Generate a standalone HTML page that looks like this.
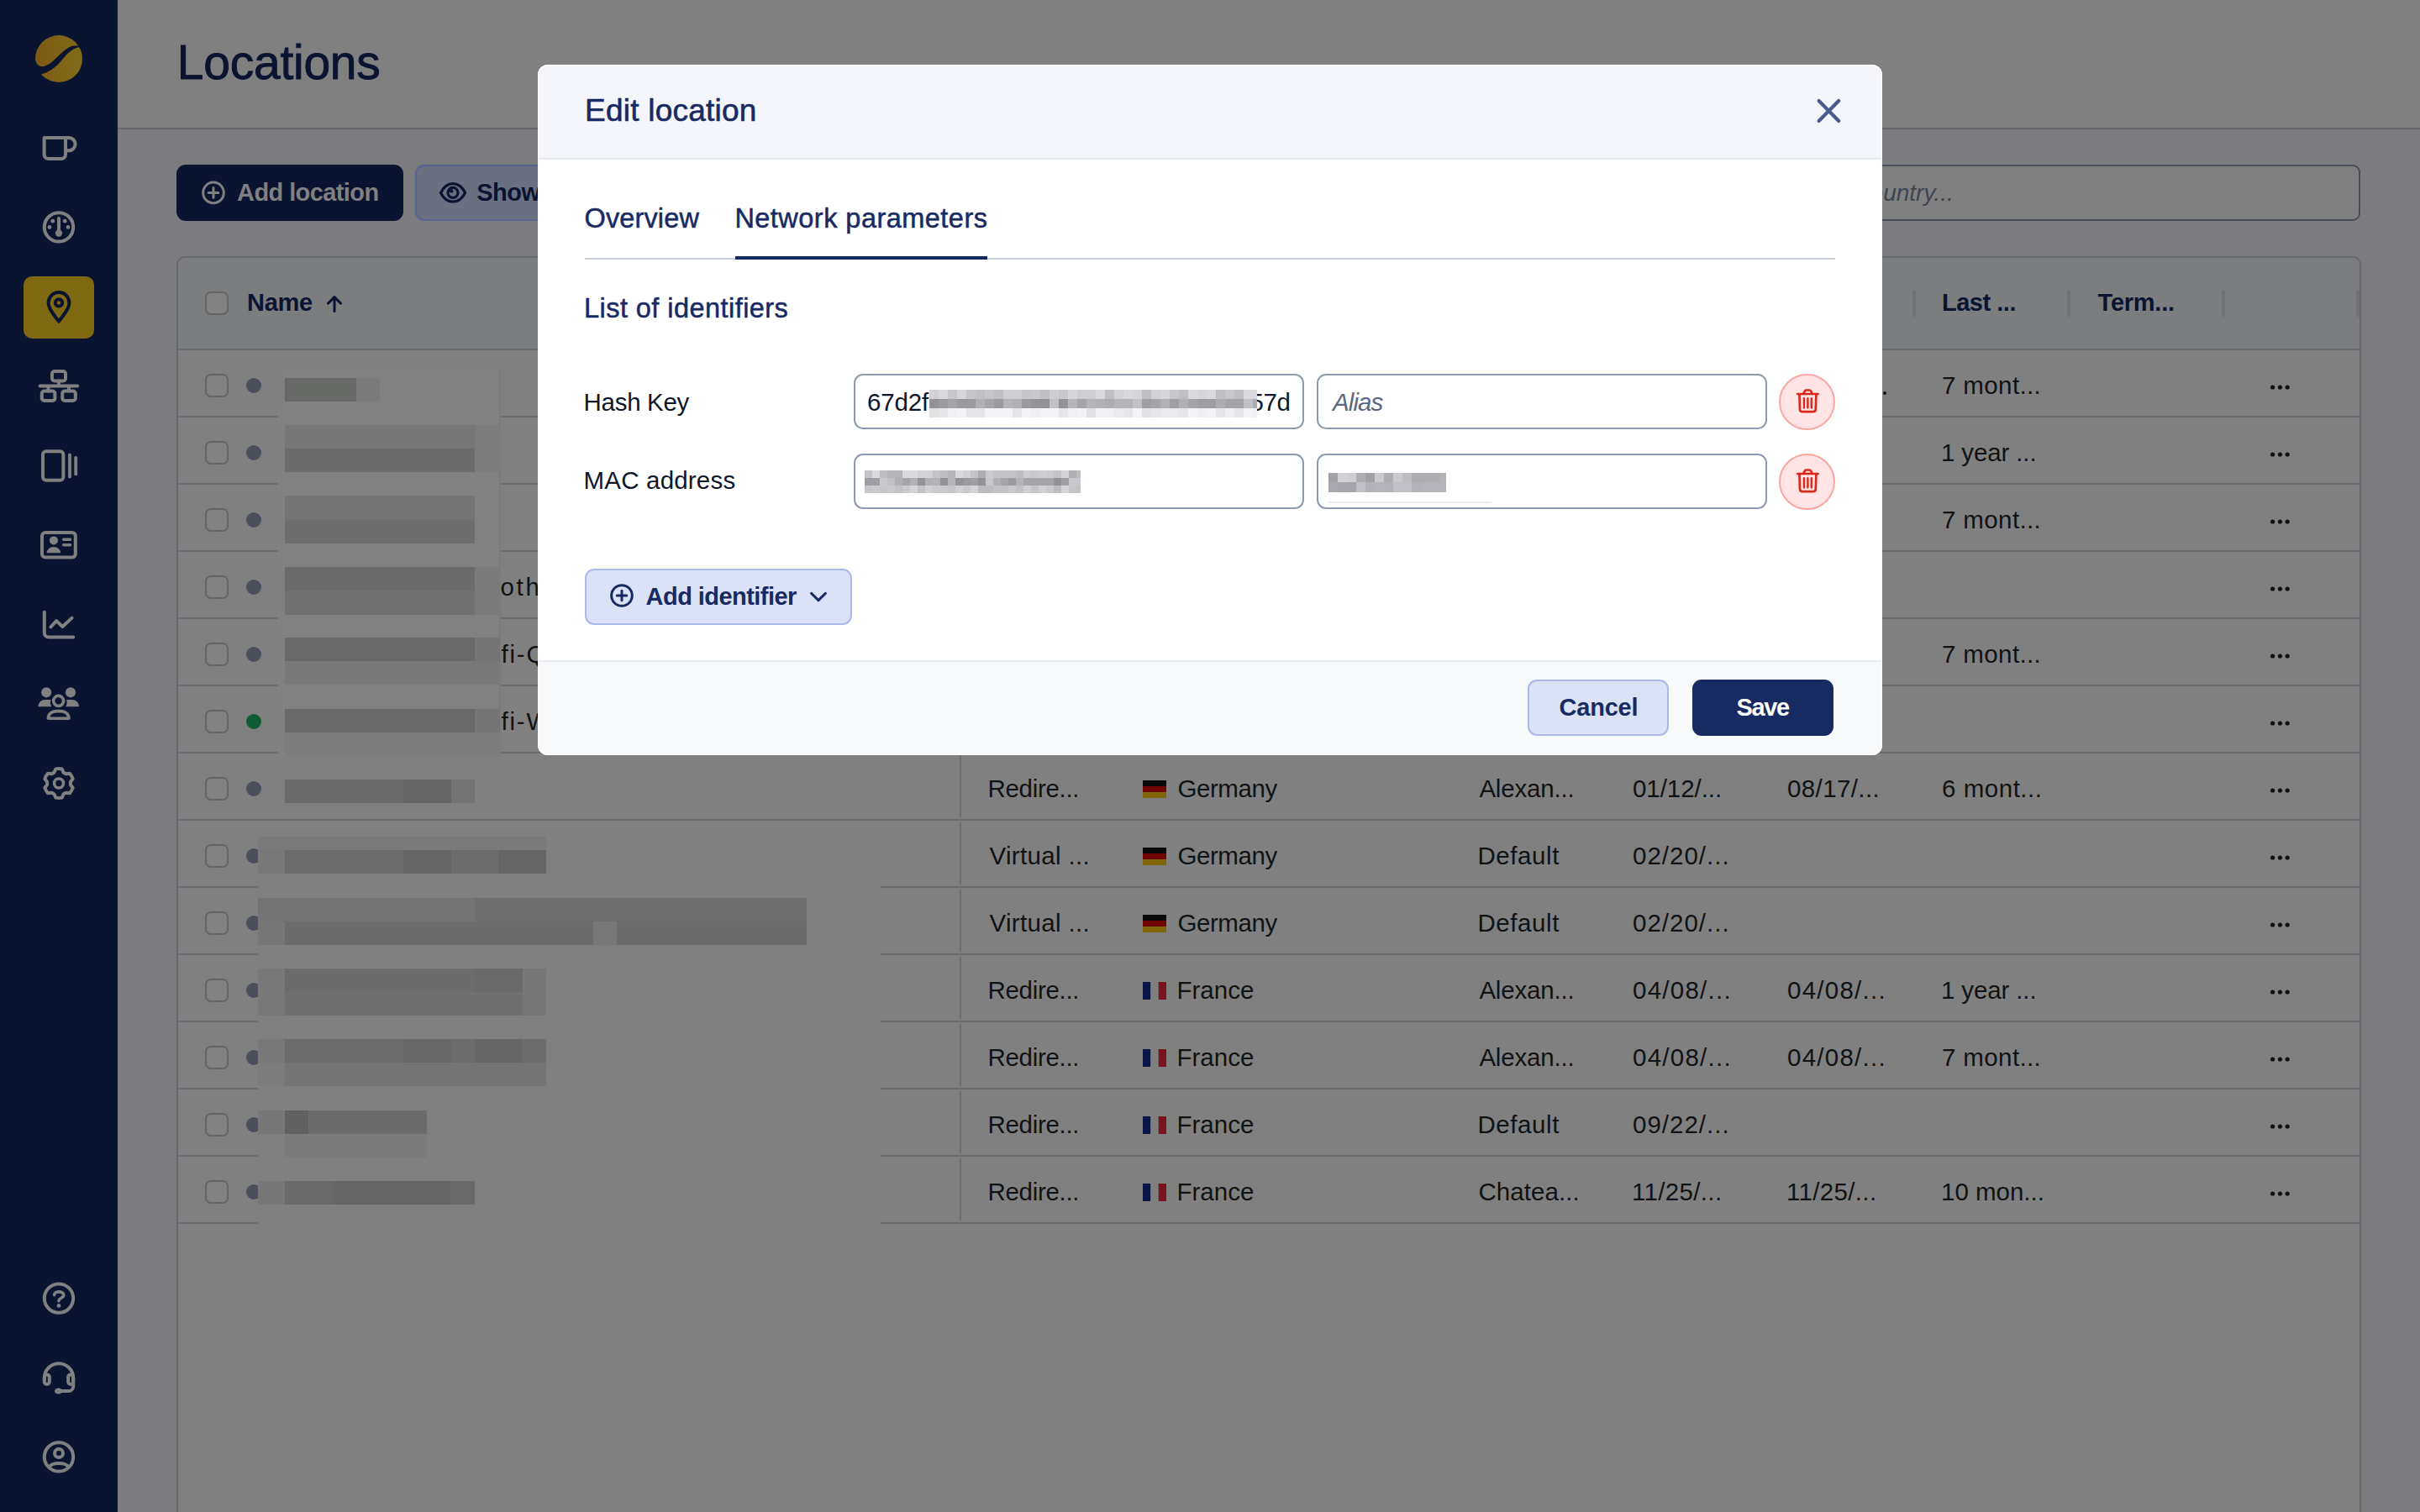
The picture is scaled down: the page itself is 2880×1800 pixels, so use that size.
<!DOCTYPE html>
<html lang="en">
<head>
<meta charset="utf-8">
<title>Locations</title>
<style>
*{box-sizing:border-box;margin:0;padding:0}
html,body{width:2880px;height:1800px;overflow:hidden;background:#7c7c7e;font-family:"Liberation Sans",sans-serif;}
.a{position:absolute}
.t{position:absolute;white-space:pre;line-height:1}
#side{left:0;top:0;width:140px;height:1800px;background:#0a1431}
#side svg{position:absolute;overflow:visible}
#tophead{left:140px;top:0;width:2740px;height:154px;background:#808080;border-bottom:2px solid #65686d}
#title{left:211px;top:47px;font-size:56px;color:#0a1330;letter-spacing:0}
/* toolbar */
#addloc{left:210px;top:196px;width:270px;height:67px;border-radius:11px;background:#0a1330}
#showbtn{left:494px;top:196px;width:300px;height:67px;border-radius:11px;background:#6b7080;border:2px solid #56648f}
#search{left:1500px;top:196px;width:1309px;height:67px;border-radius:9px;border:2px solid #484d5b;background:#808080}
/* table */
#table{left:210px;top:305px;width:2600px;height:1520px;border:2px solid #666a70;border-radius:10px;background:#808080}
.hl{position:absolute;left:212px;width:2596px;height:2px;background:#696c72}
.cb{position:absolute;left:244px;width:28px;height:28px;border:2px solid #656565;border-radius:7px;background:#828282}
.dot{position:absolute;left:293px;width:18px;height:18px;border-radius:50%;background:#4b4f5c}
.c{position:absolute;white-space:pre;line-height:1;font-size:29.5px;color:#111214;letter-spacing:.3px}
.h{position:absolute;white-space:pre;line-height:1;font-size:28px;font-weight:700;color:#0a1330}
.sep{position:absolute;top:345px;width:4px;height:32px;background:#717378;border-radius:1px}
.vl{position:absolute;left:1142px;width:2px;background:#6b6f76}
.m{position:absolute;background:#6a6b6a}
/* modal */
#modal{left:640px;top:77px;width:1600px;height:822px;border-radius:12px;background:#fff;overflow:hidden}
#mhead{left:0;top:0;width:1600px;height:113px;background:#f5f6fb;border-bottom:2px solid #e7e9f1}
#mfoot{left:0;top:709px;width:1600px;height:113px;background:#f8f9fb;border-top:2px solid #e6e8ef}
.inp{position:absolute;width:536px;height:66px;border:2px solid #8e99b2;border-radius:11px;background:#fff}
.del{position:absolute;left:1477px;width:67px;height:67px;border-radius:50%;background:#fee4e4;border:2px solid #fba6a1}
.lbl{position:absolute;left:56px;white-space:pre;line-height:1;font-size:28px;color:#0f172a}
.btn{position:absolute;height:66px;border-radius:11px}
</style>
</head>
<body>
<!-- ============ PAGE (dimmed) ============ -->
<div id="tophead" class="a"></div>
<div class="t" style="left:210.80px;top:45.65px;font-size:57px;letter-spacing:-0.250px;-webkit-text-stroke:.9px #0a1330;color:#0a1330">Locations</div>

<div id="addloc" class="a"></div>
<div id="showbtn" class="a"></div>
<div id="search" class="a"></div>

<div id="table" class="a"></div>
<svg class="a" style="left:238px;top:213px" width="32" height="32" viewBox="0 0 32 32" fill="none" stroke="#808080" stroke-width="3" stroke-linecap="round"><circle cx="16" cy="16.4" r="12.3"/><path d="M16 10.6 V22.2 M10.2 16.4 H21.8"/></svg>
<div class="t" style="left:282.10px;top:215.45px;font-size:29px;letter-spacing:-0.599px;font-weight:700;color:#808080">Add location</div>
<svg class="a" style="left:520px;top:212px" width="38" height="34" viewBox="0 0 38 34" fill="none" stroke="#0a1330" stroke-width="3.2" stroke-linejoin="round"><path d="M4.8 17.4 C8.5 9.5 13.5 6.6 19 6.6 C24.5 6.6 29.5 9.5 33.6 17.4 C29.5 25.3 24.5 28.2 19 28.2 C13.5 28.2 8.5 25.3 4.4 17.4 Z"/><circle cx="19" cy="17.4" r="6" /><circle cx="17.2" cy="15.4" r="2.2" fill="#0a1330" stroke="none"/></svg>
<div class="t" style="left:567.20px;top:215.45px;font-size:29px;letter-spacing:-0.490px;font-weight:700;color:#0a1330">Show</div>
<div class="t" style="left:1905px;top:216px;font-size:28px;font-style:italic;color:#3f4453">Search by name, group, country...</div>
<div class="a" style="left:212px;top:307px;width:2596px;height:108px;background:#7c7d7f;border-radius:8px 8px 0 0"></div>
<div class="hl" style="top:415px"></div>
<div class="cb" style="top:347px"></div>
<div class="h" style="left:294.00px;top:346.05px;font-size:29px;letter-spacing:-0.286px;">Name</div>
<svg class="a" style="left:386px;top:350px" width="24" height="24" viewBox="0 0 24 24" fill="none" stroke="#0a1330" stroke-width="3" stroke-linecap="round" stroke-linejoin="round"><path d="M12 20.4 V3.8 M4.4 11.2 L12 3.6 L19.6 11.2"/></svg>
<div class="sep" style="left:2276px"></div>
<div class="sep" style="left:2460px"></div>
<div class="sep" style="left:2644px"></div>
<div class="sep" style="left:2804px"></div>
<div class="h" style="left:2311.00px;top:346.05px;font-size:29px;letter-spacing:-0.486px;">Last ...</div>
<div class="h" style="left:2496.60px;top:346.05px;font-size:29px;letter-spacing:-0.246px;">Term...</div>
<div class="hl" style="top:495px"></div>
<div class="cb" style="top:445px"></div>
<div class="dot" style="top:450px"></div>
<div class="vl" style="top:419px;height:74px"></div>
<div class="c" style="left:1175.50px;top:443.83px;letter-spacing:-0.312px">Redire...</div>
<svg class="a" style="left:1360px;top:449px" width="28" height="21" viewBox="0 0 28 21"><rect width="28" height="7" fill="#0b0b0b"/><rect y="7" width="28" height="7" fill="#6f0400"/><rect y="14" width="28" height="7" fill="#80650a"/></svg>
<div class="c" style="left:1401.40px;top:443.83px;letter-spacing:-0.427px">Germany</div>
<div class="c" style="left:1760.40px;top:443.83px;letter-spacing:-0.199px">Alexan...</div>
<div class="c" style="left:1942.00px;top:443.83px;letter-spacing:0.199px">10/10/...</div>
<div class="c" style="left:2126.00px;top:443.83px;letter-spacing:0.199px">10/10/...</div>
<div class="c" style="left:2311.00px;top:443.83px;letter-spacing:0.378px">7 mont...</div>
<svg class="a" style="left:2700px;top:457px" width="28" height="8" viewBox="0 0 28 8" fill="#111214"><circle cx="4.6" cy="4" r="2.6"/><circle cx="13.4" cy="4" r="2.6"/><circle cx="22.2" cy="4" r="2.6"/></svg>
<div class="hl" style="top:575px"></div>
<div class="cb" style="top:525px"></div>
<div class="dot" style="top:530px"></div>
<div class="vl" style="top:499px;height:74px"></div>
<div class="c" style="left:1175.50px;top:523.83px;letter-spacing:-0.312px">Redire...</div>
<svg class="a" style="left:1360px;top:529px" width="28" height="21" viewBox="0 0 28 21"><rect width="28" height="7" fill="#0b0b0b"/><rect y="7" width="28" height="7" fill="#6f0400"/><rect y="14" width="28" height="7" fill="#80650a"/></svg>
<div class="c" style="left:1401.40px;top:523.83px;letter-spacing:-0.427px">Germany</div>
<div class="c" style="left:1760.40px;top:523.83px;letter-spacing:-0.199px">Alexan...</div>
<div class="c" style="left:1942.00px;top:523.83px;letter-spacing:0.199px">10/10/...</div>
<div class="c" style="left:2126.00px;top:523.83px;letter-spacing:-0.164px">10/10/</div>
<div class="c" style="left:2310.00px;top:523.83px;letter-spacing:-0.131px">1 year ...</div>
<svg class="a" style="left:2700px;top:537px" width="28" height="8" viewBox="0 0 28 8" fill="#111214"><circle cx="4.6" cy="4" r="2.6"/><circle cx="13.4" cy="4" r="2.6"/><circle cx="22.2" cy="4" r="2.6"/></svg>
<div class="hl" style="top:655px"></div>
<div class="cb" style="top:605px"></div>
<div class="dot" style="top:610px"></div>
<div class="vl" style="top:579px;height:74px"></div>
<div class="c" style="left:1175.50px;top:603.83px;letter-spacing:-0.312px">Redire...</div>
<svg class="a" style="left:1360px;top:609px" width="28" height="21" viewBox="0 0 28 21"><rect width="28" height="7" fill="#0b0b0b"/><rect y="7" width="28" height="7" fill="#6f0400"/><rect y="14" width="28" height="7" fill="#80650a"/></svg>
<div class="c" style="left:1401.40px;top:603.83px;letter-spacing:-0.427px">Germany</div>
<div class="c" style="left:1760.40px;top:603.83px;letter-spacing:-0.199px">Alexan...</div>
<div class="c" style="left:1942.00px;top:603.83px;letter-spacing:0.199px">10/10/...</div>
<div class="c" style="left:2126.00px;top:603.83px;letter-spacing:-0.164px">10/10/</div>
<div class="c" style="left:2311.00px;top:603.83px;letter-spacing:0.378px">7 mont...</div>
<svg class="a" style="left:2700px;top:617px" width="28" height="8" viewBox="0 0 28 8" fill="#111214"><circle cx="4.6" cy="4" r="2.6"/><circle cx="13.4" cy="4" r="2.6"/><circle cx="22.2" cy="4" r="2.6"/></svg>
<div class="hl" style="top:735px"></div>
<div class="cb" style="top:685px"></div>
<div class="dot" style="top:690px"></div>
<div class="vl" style="top:659px;height:74px"></div>
<div class="c" style="left:1175.50px;top:683.83px;letter-spacing:-0.312px">Redire...</div>
<svg class="a" style="left:1360px;top:689px" width="28" height="21" viewBox="0 0 28 21"><rect width="28" height="7" fill="#0b0b0b"/><rect y="7" width="28" height="7" fill="#6f0400"/><rect y="14" width="28" height="7" fill="#80650a"/></svg>
<div class="c" style="left:1401.40px;top:683.83px;letter-spacing:-0.427px">Germany</div>
<div class="c" style="left:1758.40px;top:683.83px;letter-spacing:0.588px">Default</div>
<div class="c" style="left:1942.00px;top:683.83px;letter-spacing:0.199px">10/10/...</div>
<svg class="a" style="left:2700px;top:697px" width="28" height="8" viewBox="0 0 28 8" fill="#111214"><circle cx="4.6" cy="4" r="2.6"/><circle cx="13.4" cy="4" r="2.6"/><circle cx="22.2" cy="4" r="2.6"/></svg>
<div class="hl" style="top:815px"></div>
<div class="cb" style="top:765px"></div>
<div class="dot" style="top:770px"></div>
<div class="vl" style="top:739px;height:74px"></div>
<div class="c" style="left:1175.50px;top:763.83px;letter-spacing:-0.312px">Redire...</div>
<svg class="a" style="left:1360px;top:769px" width="28" height="21" viewBox="0 0 28 21"><rect width="28" height="7" fill="#0b0b0b"/><rect y="7" width="28" height="7" fill="#6f0400"/><rect y="14" width="28" height="7" fill="#80650a"/></svg>
<div class="c" style="left:1401.40px;top:763.83px;letter-spacing:-0.427px">Germany</div>
<div class="c" style="left:1760.40px;top:763.83px;letter-spacing:-0.199px">Alexan...</div>
<div class="c" style="left:1942.00px;top:763.83px;letter-spacing:0.199px">10/10/...</div>
<div class="c" style="left:2126.00px;top:763.83px;letter-spacing:-0.164px">10/10/</div>
<div class="c" style="left:2311.00px;top:763.83px;letter-spacing:0.378px">7 mont...</div>
<svg class="a" style="left:2700px;top:777px" width="28" height="8" viewBox="0 0 28 8" fill="#111214"><circle cx="4.6" cy="4" r="2.6"/><circle cx="13.4" cy="4" r="2.6"/><circle cx="22.2" cy="4" r="2.6"/></svg>
<div class="hl" style="top:895px"></div>
<div class="cb" style="top:845px"></div>
<div class="dot" style="top:850px;background:#0f5c34"></div>
<div class="vl" style="top:819px;height:74px"></div>
<div class="c" style="left:1175.50px;top:843.83px;letter-spacing:-0.312px">Redire...</div>
<svg class="a" style="left:1360px;top:849px" width="28" height="21" viewBox="0 0 28 21"><rect width="28" height="7" fill="#0b0b0b"/><rect y="7" width="28" height="7" fill="#6f0400"/><rect y="14" width="28" height="7" fill="#80650a"/></svg>
<div class="c" style="left:1401.40px;top:843.83px;letter-spacing:-0.427px">Germany</div>
<div class="c" style="left:1758.40px;top:843.83px;letter-spacing:0.588px">Default</div>
<div class="c" style="left:1942.00px;top:843.83px;letter-spacing:0.199px">10/10/...</div>
<svg class="a" style="left:2700px;top:857px" width="28" height="8" viewBox="0 0 28 8" fill="#111214"><circle cx="4.6" cy="4" r="2.6"/><circle cx="13.4" cy="4" r="2.6"/><circle cx="22.2" cy="4" r="2.6"/></svg>
<div class="hl" style="top:975px"></div>
<div class="cb" style="top:925px"></div>
<div class="dot" style="top:930px"></div>
<div class="vl" style="top:899px;height:74px"></div>
<div class="c" style="left:1175.50px;top:923.83px;letter-spacing:-0.312px">Redire...</div>
<svg class="a" style="left:1360px;top:929px" width="28" height="21" viewBox="0 0 28 21"><rect width="28" height="7" fill="#0b0b0b"/><rect y="7" width="28" height="7" fill="#6f0400"/><rect y="14" width="28" height="7" fill="#80650a"/></svg>
<div class="c" style="left:1401.40px;top:923.83px;letter-spacing:-0.427px">Germany</div>
<div class="c" style="left:1760.40px;top:923.83px;letter-spacing:-0.199px">Alexan...</div>
<div class="c" style="left:1943.00px;top:923.83px;letter-spacing:-0.064px">01/12/...</div>
<div class="c" style="left:2127.00px;top:923.83px;letter-spacing:0.386px">08/17/...</div>
<div class="c" style="left:2311.00px;top:923.83px;letter-spacing:0.528px">6 mont...</div>
<svg class="a" style="left:2700px;top:937px" width="28" height="8" viewBox="0 0 28 8" fill="#111214"><circle cx="4.6" cy="4" r="2.6"/><circle cx="13.4" cy="4" r="2.6"/><circle cx="22.2" cy="4" r="2.6"/></svg>
<div class="hl" style="top:1055px"></div>
<div class="cb" style="top:1005px"></div>
<div class="dot" style="top:1010px"></div>
<div class="vl" style="top:979px;height:74px"></div>
<div class="c" style="left:1177.50px;top:1003.83px;letter-spacing:0.333px">Virtual ...</div>
<svg class="a" style="left:1360px;top:1009px" width="28" height="21" viewBox="0 0 28 21"><rect width="28" height="7" fill="#0b0b0b"/><rect y="7" width="28" height="7" fill="#6f0400"/><rect y="14" width="28" height="7" fill="#80650a"/></svg>
<div class="c" style="left:1401.40px;top:1003.83px;letter-spacing:-0.427px">Germany</div>
<div class="c" style="left:1758.40px;top:1003.83px;letter-spacing:0.588px">Default</div>
<div class="c" style="left:1943.00px;top:1003.83px;letter-spacing:0.999px">02/20/...</div>
<svg class="a" style="left:2700px;top:1017px" width="28" height="8" viewBox="0 0 28 8" fill="#111214"><circle cx="4.6" cy="4" r="2.6"/><circle cx="13.4" cy="4" r="2.6"/><circle cx="22.2" cy="4" r="2.6"/></svg>
<div class="hl" style="top:1135px"></div>
<div class="cb" style="top:1085px"></div>
<div class="dot" style="top:1090px"></div>
<div class="vl" style="top:1059px;height:74px"></div>
<div class="c" style="left:1177.50px;top:1083.83px;letter-spacing:0.333px">Virtual ...</div>
<svg class="a" style="left:1360px;top:1089px" width="28" height="21" viewBox="0 0 28 21"><rect width="28" height="7" fill="#0b0b0b"/><rect y="7" width="28" height="7" fill="#6f0400"/><rect y="14" width="28" height="7" fill="#80650a"/></svg>
<div class="c" style="left:1401.40px;top:1083.83px;letter-spacing:-0.427px">Germany</div>
<div class="c" style="left:1758.40px;top:1083.83px;letter-spacing:0.588px">Default</div>
<div class="c" style="left:1943.00px;top:1083.83px;letter-spacing:0.999px">02/20/...</div>
<svg class="a" style="left:2700px;top:1097px" width="28" height="8" viewBox="0 0 28 8" fill="#111214"><circle cx="4.6" cy="4" r="2.6"/><circle cx="13.4" cy="4" r="2.6"/><circle cx="22.2" cy="4" r="2.6"/></svg>
<div class="hl" style="top:1215px"></div>
<div class="cb" style="top:1165px"></div>
<div class="dot" style="top:1170px"></div>
<div class="vl" style="top:1139px;height:74px"></div>
<div class="c" style="left:1175.50px;top:1163.83px;letter-spacing:-0.312px">Redire...</div>
<svg class="a" style="left:1360px;top:1169px" width="28" height="21" viewBox="0 0 28 21"><rect width="9.4" height="21" fill="#0a1548"/><rect x="9.4" width="9.3" height="21" fill="#808080"/><rect x="18.7" width="9.3" height="21" fill="#7a1420"/></svg>
<div class="c" style="left:1400.40px;top:1163.83px;letter-spacing:0.059px">France</div>
<div class="c" style="left:1760.40px;top:1163.83px;letter-spacing:-0.199px">Alexan...</div>
<div class="c" style="left:1943.00px;top:1163.83px;letter-spacing:1.249px">04/08/...</div>
<div class="c" style="left:2127.00px;top:1163.83px;letter-spacing:1.249px">04/08/...</div>
<div class="c" style="left:2310.00px;top:1163.83px;letter-spacing:-0.131px">1 year ...</div>
<svg class="a" style="left:2700px;top:1177px" width="28" height="8" viewBox="0 0 28 8" fill="#111214"><circle cx="4.6" cy="4" r="2.6"/><circle cx="13.4" cy="4" r="2.6"/><circle cx="22.2" cy="4" r="2.6"/></svg>
<div class="hl" style="top:1295px"></div>
<div class="cb" style="top:1245px"></div>
<div class="dot" style="top:1250px"></div>
<div class="vl" style="top:1219px;height:74px"></div>
<div class="c" style="left:1175.50px;top:1243.83px;letter-spacing:-0.312px">Redire...</div>
<svg class="a" style="left:1360px;top:1249px" width="28" height="21" viewBox="0 0 28 21"><rect width="9.4" height="21" fill="#0a1548"/><rect x="9.4" width="9.3" height="21" fill="#808080"/><rect x="18.7" width="9.3" height="21" fill="#7a1420"/></svg>
<div class="c" style="left:1400.40px;top:1243.83px;letter-spacing:0.059px">France</div>
<div class="c" style="left:1760.40px;top:1243.83px;letter-spacing:-0.199px">Alexan...</div>
<div class="c" style="left:1943.00px;top:1243.83px;letter-spacing:1.249px">04/08/...</div>
<div class="c" style="left:2127.00px;top:1243.83px;letter-spacing:1.249px">04/08/...</div>
<div class="c" style="left:2311.00px;top:1243.83px;letter-spacing:0.378px">7 mont...</div>
<svg class="a" style="left:2700px;top:1257px" width="28" height="8" viewBox="0 0 28 8" fill="#111214"><circle cx="4.6" cy="4" r="2.6"/><circle cx="13.4" cy="4" r="2.6"/><circle cx="22.2" cy="4" r="2.6"/></svg>
<div class="hl" style="top:1375px"></div>
<div class="cb" style="top:1325px"></div>
<div class="dot" style="top:1330px"></div>
<div class="vl" style="top:1299px;height:74px"></div>
<div class="c" style="left:1175.50px;top:1323.83px;letter-spacing:-0.312px">Redire...</div>
<svg class="a" style="left:1360px;top:1329px" width="28" height="21" viewBox="0 0 28 21"><rect width="9.4" height="21" fill="#0a1548"/><rect x="9.4" width="9.3" height="21" fill="#808080"/><rect x="18.7" width="9.3" height="21" fill="#7a1420"/></svg>
<div class="c" style="left:1400.40px;top:1323.83px;letter-spacing:0.059px">France</div>
<div class="c" style="left:1758.40px;top:1323.83px;letter-spacing:0.588px">Default</div>
<div class="c" style="left:1943.00px;top:1323.83px;letter-spacing:0.999px">09/22/...</div>
<svg class="a" style="left:2700px;top:1337px" width="28" height="8" viewBox="0 0 28 8" fill="#111214"><circle cx="4.6" cy="4" r="2.6"/><circle cx="13.4" cy="4" r="2.6"/><circle cx="22.2" cy="4" r="2.6"/></svg>
<div class="hl" style="top:1455px"></div>
<div class="cb" style="top:1405px"></div>
<div class="dot" style="top:1410px"></div>
<div class="vl" style="top:1379px;height:74px"></div>
<div class="c" style="left:1175.50px;top:1403.83px;letter-spacing:-0.312px">Redire...</div>
<svg class="a" style="left:1360px;top:1409px" width="28" height="21" viewBox="0 0 28 21"><rect width="9.4" height="21" fill="#0a1548"/><rect x="9.4" width="9.3" height="21" fill="#808080"/><rect x="18.7" width="9.3" height="21" fill="#7a1420"/></svg>
<div class="c" style="left:1400.40px;top:1403.83px;letter-spacing:0.059px">France</div>
<div class="c" style="left:1759.40px;top:1403.83px;letter-spacing:0.060px">Chatea...</div>
<div class="c" style="left:1942.00px;top:1403.83px;letter-spacing:0.335px">11/25/...</div>
<div class="c" style="left:2126.00px;top:1403.83px;letter-spacing:0.335px">11/25/...</div>
<div class="c" style="left:2310.00px;top:1403.83px;letter-spacing:-0.011px">10 mon...</div>
<svg class="a" style="left:2700px;top:1417px" width="28" height="8" viewBox="0 0 28 8" fill="#111214"><circle cx="4.6" cy="4" r="2.6"/><circle cx="13.4" cy="4" r="2.6"/><circle cx="22.2" cy="4" r="2.6"/></svg>
<div class="c" style="left:595.50px;top:683.83px;letter-spacing:2.699px">oth</div>
<div class="c" style="left:596.50px;top:763.83px;letter-spacing:1.809px">fi-Q</div>
<div class="c" style="left:596.50px;top:843.83px;letter-spacing:1.809px">fi-W</div>
<div class="a" style="left:331px;top:440px;width:264px;height:460px;background:#818181"></div>
<div class="a" style="left:594px;top:440px;width:2px;height:460px;background:#7a7b7c"></div>
<div class="m" style="left:339px;top:450px;width:85px;height:28px;background:#676967"></div>
<div class="m" style="left:424px;top:450px;width:28px;height:28px;background:#7a7b7a"></div>
<div class="m" style="left:339px;top:506px;width:226px;height:28px;background:#767776"></div>
<div class="m" style="left:339px;top:534px;width:226px;height:28px;background:#6b6c6b"></div>
<div class="m" style="left:565px;top:506px;width:30px;height:56px;background:#7b7c7b"></div>
<div class="m" style="left:339px;top:590px;width:226px;height:29px;background:#747574"></div>
<div class="m" style="left:339px;top:619px;width:226px;height:28px;background:#6d6e6d"></div>
<div class="m" style="left:339px;top:675px;width:226px;height:28px;background:#6b6b6b"></div>
<div class="m" style="left:339px;top:703px;width:226px;height:29px;background:#707170"></div>
<div class="m" style="left:565px;top:675px;width:30px;height:57px;background:#7b7b7b"></div>
<div class="m" style="left:339px;top:759px;width:226px;height:28px;background:#6a6a6a"></div>
<div class="m" style="left:565px;top:759px;width:30px;height:28px;background:#747574"></div>
<div class="m" style="left:339px;top:787px;width:256px;height:28px;background:#787978"></div>
<div class="m" style="left:339px;top:844px;width:226px;height:28px;background:#6a6a6a"></div>
<div class="m" style="left:565px;top:844px;width:30px;height:28px;background:#747574"></div>
<div class="m" style="left:339px;top:872px;width:256px;height:28px;background:#7c7d7c"></div>
<div class="m" style="left:339px;top:928px;width:198px;height:28px;background:#6a6b6a"></div>
<div class="m" style="left:480px;top:928px;width:57px;height:28px;background:#646564"></div>
<div class="m" style="left:537px;top:928px;width:28px;height:28px;background:#737473"></div>
<div class="a" style="left:307px;top:996px;width:740px;height:461px;background:#7f807f"></div>
<div class="m" style="left:307px;top:996px;width:343px;height:16px;background:#797a79"></div>
<div class="m" style="left:339px;top:1012px;width:311px;height:28px;background:#6d6d6d"></div>
<div class="m" style="left:480px;top:1012px;width:57px;height:28px;background:#666666"></div>
<div class="m" style="left:593px;top:1012px;width:57px;height:28px;background:#646564"></div>
<div class="m" style="left:307px;top:1012px;width:32px;height:28px;background:#777877"></div>
<div class="m" style="left:307px;top:1069px;width:653px;height:28px;background:#747474"></div>
<div class="m" style="left:339px;top:1097px;width:621px;height:28px;background:#6b6c6b"></div>
<div class="m" style="left:307px;top:1097px;width:32px;height:28px;background:#767776"></div>
<div class="m" style="left:706px;top:1097px;width:28px;height:28px;background:#787878"></div>
<div class="m" style="left:565px;top:1069px;width:395px;height:28px;background:#6f6f6f"></div>
<div class="m" style="left:307px;top:1153px;width:32px;height:56px;background:#777877"></div><div class="m" style="left:339px;top:1153px;width:283px;height:56px;background:#6f706f"></div>
<div class="m" style="left:339px;top:1153px;width:283px;height:28px;background:#6c6c6c"></div>
<div class="m" style="left:565px;top:1153px;width:57px;height:28px;background:#696969"></div>
<div class="m" style="left:622px;top:1153px;width:28px;height:56px;background:#777777"></div>
<div class="m" style="left:307px;top:1237px;width:32px;height:28px;background:#777877"></div><div class="m" style="left:339px;top:1237px;width:311px;height:28px;background:#6c6d6c"></div>
<div class="m" style="left:480px;top:1237px;width:57px;height:28px;background:#676767"></div>
<div class="m" style="left:565px;top:1237px;width:57px;height:28px;background:#656665"></div>
<div class="m" style="left:307px;top:1265px;width:32px;height:28px;background:#7b7c7b"></div><div class="m" style="left:339px;top:1265px;width:311px;height:28px;background:#747574"></div>
<div class="m" style="left:307px;top:1322px;width:201px;height:28px;background:#6b6b6b"></div>
<div class="m" style="left:339px;top:1322px;width:28px;height:28px;background:#5f605f"></div>
<div class="m" style="left:307px;top:1322px;width:32px;height:28px;background:#777777"></div>
<div class="m" style="left:339px;top:1350px;width:169px;height:28px;background:#7a7b7a"></div>
<div class="m" style="left:307px;top:1406px;width:258px;height:28px;background:#696969"></div>
<div class="m" style="left:307px;top:1406px;width:32px;height:28px;background:#767776"></div>
<div class="m" style="left:396px;top:1406px;width:140px;height:28px;background:#656565"></div>

<div class="a" style="left:2241px;top:466px;width:4px;height:4px;border-radius:50%;background:#111214"></div>
<!-- ============ SIDEBAR ============ -->
<div id="side" class="a">

<!-- logo -->
<svg style="left:0;top:0" width="140" height="140" viewBox="0 0 140 140">
  <defs><linearGradient id="lg" x1="0" y1="0" x2="1" y2="0"><stop offset="0" stop-color="#7f5814"/><stop offset=".55" stop-color="#806417"/><stop offset="1" stop-color="#806b17"/></linearGradient>
  <clipPath id="lc"><circle cx="70" cy="70" r="29.5"/></clipPath></defs>
  <circle cx="70" cy="70" r="28" fill="url(#lg)"/>
  <path clip-path="url(#lc)" fill="#0a1330" d="M95 54.8 C86 52.6 78.5 57.5 70 66 C63 73 56.5 79.2 50 79.2 C46.4 79.2 43.8 77.2 42.6 72.6 L36 66 L32 82 L42 98 L49.4 88.3 C58.5 86 66 80 72 73.5 C78 66 85 57.3 95 56 Z"/>
</svg>
<!-- mug -->
<svg style="left:0;top:130px" width="140" height="90" viewBox="0 130 140 90" fill="none" stroke="#808080" stroke-width="4" stroke-linejoin="round" stroke-linecap="round">
  <path d="M52.6 164 H78 V184 a5 5 0 0 1 -5 5 H57.6 a5 5 0 0 1 -5 -5 Z"/>
  <path d="M78 164 H82 a7.6 7.6 0 0 1 0 15.2 H78"/>
</svg>
<!-- gauge -->
<svg style="left:0;top:230px" width="140" height="80" viewBox="0 230 140 80" fill="none" stroke="#808080" stroke-width="4" stroke-linecap="round">
  <circle cx="70" cy="270.4" r="17.2"/>
  <path d="M70 260 V276"/>
  <circle cx="70" cy="277.6" r="4.2" fill="#808080" stroke="none"/>
  <g fill="#808080" stroke="none"><circle cx="59" cy="270.4" r="2.4"/><circle cx="81" cy="270.4" r="2.4"/><circle cx="62.8" cy="263.2" r="2.4"/><circle cx="77.2" cy="263.2" r="2.4"/></g>
</svg>
<!-- active location -->
<div class="a" style="left:28px;top:329px;width:84px;height:74px;border-radius:10px;background:#7f6912"></div>
<svg style="left:0;top:329px" width="140" height="74" viewBox="0 329 140 74" fill="none" stroke="#0a1330" stroke-width="4" stroke-linejoin="round">
  <path d="M70 382.6 C63 373.5 57.6 366.5 57.6 360.4 a12.4 12.4 0 0 1 24.8 0 C82.4 366.5 77 373.5 70 382.6 Z"/>
  <circle cx="70" cy="360.4" r="4.2"/>
</svg>
<!-- network -->
<svg style="left:0;top:430px" width="140" height="60" viewBox="0 430 140 60" fill="none" stroke="#808080" stroke-width="4" stroke-linejoin="round" stroke-linecap="round">
  <rect x="62" y="442" width="16" height="11.4" rx="3"/>
  <path d="M47.6 459.6 H92.2 M70 453.4 V459.6 M57.5 459.6 V465.6 M82 459.6 V465.6"/>
  <rect x="49.8" y="465.6" width="15.6" height="11.4" rx="3"/>
  <rect x="74.2" y="465.6" width="15.6" height="11.4" rx="3"/>
</svg>
<!-- devices -->
<svg style="left:0;top:525px" width="140" height="60" viewBox="0 525 140 60" fill="none" stroke="#808080" stroke-width="4" stroke-linejoin="round" stroke-linecap="round">
  <rect x="51" y="537.2" width="24.4" height="34.6" rx="4"/>
  <path d="M83 541.4 V567.6 M90.2 544.8 V564.4" stroke-width="3.8"/>
</svg>
<!-- id card -->
<svg style="left:0;top:620px" width="140" height="60" viewBox="0 620 140 60" fill="none" stroke="#808080" stroke-width="4" stroke-linejoin="round" stroke-linecap="round">
  <rect x="50" y="634" width="39.8" height="29.4" rx="4"/>
  <g fill="#808080" stroke="none"><circle cx="63.9" cy="643.4" r="5"/><path d="M55.6 658.3 a8.3 7.2 0 0 1 16.6 0 Z"/></g>
  <path d="M75.6 642.3 H83.6 M75.6 648.7 H83.6" stroke-width="3.4"/>
</svg>
<!-- chart -->
<svg style="left:0;top:715px" width="140" height="60" viewBox="0 715 140 60" fill="none" stroke="#808080" stroke-width="4" stroke-linejoin="round" stroke-linecap="round">
  <path d="M52.8 728.8 V753.6 a5 5 0 0 0 5 5 H87.2"/>
  <path d="M60.4 746.4 L67.2 739.2 L74.4 746 L85.6 735.6"/>
</svg>
<!-- users -->
<svg style="left:0;top:810px" width="140" height="60" viewBox="0 810 140 60" fill="none" stroke="#808080" stroke-width="3.6" stroke-linejoin="round" stroke-linecap="round">
  <g fill="#808080" stroke="none"><circle cx="55.2" cy="824.3" r="6.1"/><circle cx="84" cy="824.3" r="6.1"/>
  <path d="M45.6 841.2 C45.6 836 49.5 833 54 833 H60.6 C59.4 836.5 60 839.5 61.6 841.2 Z"/>
  <path d="M94 841.2 C94 836 90.1 833 85.6 833 H79 C80.2 836.5 79.6 839.5 78 841.2 Z"/></g>
  <circle cx="69.6" cy="834.4" r="6"/>
  <path d="M57.4 855.2 C57.4 850 62 846.6 67 846.6 H72.4 C77.4 846.6 82 850 82 855.2 Z"/>
</svg>
<!-- gear -->
<svg style="left:0;top:905px" width="140" height="60" viewBox="0 905 140 60" fill="none" stroke="#808080" stroke-width="4" stroke-linejoin="round">
  <circle cx="70" cy="932.5" r="5.5" stroke-width="3.6"/>
  <path d="M64.53 919.61 L66.21 915.41 A17.50 17.50 0 0 1 73.79 915.41 L75.47 919.61 A14.00 14.00 0 0 1 78.43 921.32 L82.90 920.68 A17.50 17.50 0 0 1 86.69 927.24 L83.90 930.79 A14.00 14.00 0 0 1 83.90 934.21 L86.69 937.76 A17.50 17.50 0 0 1 82.90 944.32 L78.43 943.68 A14.00 14.00 0 0 1 75.47 945.39 L73.79 949.59 A17.50 17.50 0 0 1 66.21 949.59 L64.53 945.39 A14.00 14.00 0 0 1 61.57 943.68 L57.10 944.32 A17.50 17.50 0 0 1 53.31 937.76 L56.10 934.21 A14.00 14.00 0 0 1 56.10 930.79 L53.31 927.24 A17.50 17.50 0 0 1 57.10 920.68 L61.57 921.32 A14.00 14.00 0 0 1 64.53 919.61 Z" stroke-width="4"/>
</svg>
<!-- help -->
<svg style="left:0;top:1515px" width="140" height="60" viewBox="0 1515 140 60" fill="none" stroke="#808080" stroke-width="4" stroke-linecap="round" stroke-linejoin="round">
  <circle cx="70" cy="1545.6" r="17.2"/>
  <path d="M64.6 1541.6 C64.6 1536.6 75.8 1536.6 75.8 1541.8 C75.8 1545.4 70 1545.2 70 1548.8" stroke-width="3.6"/>
  <circle cx="70" cy="1554.4" r="2.4" fill="#808080" stroke="none"/>
</svg>
<!-- headset -->
<svg style="left:0;top:1610px" width="140" height="60" viewBox="0 1610 140 60" fill="none" stroke="#808080" stroke-width="4" stroke-linecap="round" stroke-linejoin="round">
  <path d="M52.8 1643 V1640.4 a17.2 17.2 0 0 1 34.4 0 V1650.4 a5.6 5.6 0 0 1 -5.6 5.6 H72"/>
  <rect x="52.8" y="1636.4" width="6" height="11.6" rx="3"/>
  <rect x="81.2" y="1636.4" width="6" height="11.6" rx="3"/>
  <ellipse cx="69.6" cy="1656" rx="4.6" ry="3.6" fill="#808080" stroke="none"/>
</svg>
<!-- user circle -->
<svg style="left:0;top:1705px" width="140" height="60" viewBox="0 1705 140 60" fill="none" stroke="#808080" stroke-width="4" stroke-linecap="round" stroke-linejoin="round">
  <circle cx="70" cy="1734.4" r="17.2"/>
  <circle cx="70" cy="1730" r="5"/>
  <path d="M58.6 1746.6 C62 1740.6 78 1740.6 81.4 1746.6"/>
</svg>

</div>

<!-- ============ MODAL ============ -->
<div id="modal" class="a">
  <div id="mhead" class="a"></div>
  <div id="mfoot" class="a"></div>
<div class="t" style="left:56.10px;top:35.98px;font-size:37px;letter-spacing:0.218px;-webkit-text-stroke:.6px #182a62;color:#182a62">Edit location</div>
<svg class="a" style="left:1518px;top:37px" width="36" height="36" viewBox="0 0 36 36" fill="none" stroke="#4a5b8d" stroke-width="4.2" stroke-linecap="round"><path d="M6.6 6 L30.2 29.9 M30.2 6 L6.6 29.9"/></svg>
<div class="t" style="left:55.60px;top:167.19px;font-size:32.5px;letter-spacing:0.118px;-webkit-text-stroke:.5px #182a62;color:#182a62">Overview</div>
<div class="t" style="left:234.40px;top:167.19px;font-size:32.5px;letter-spacing:0.468px;-webkit-text-stroke:.5px #182a62;color:#182a62">Network parameters</div>
<div class="a" style="left:56px;top:230px;width:1488px;height:2px;background:#c9cedb"></div>
<div class="a" style="left:235px;top:228px;width:300px;height:4px;background:#182a62"></div>
<div class="t" style="left:55.00px;top:274.09px;font-size:32.5px;letter-spacing:0.445px;-webkit-text-stroke:.5px #182a62;color:#182a62">List of identifiers</div>
<div class="lbl" style="left:54.60px;top:386.73px;font-size:29.5px;letter-spacing:-0.307px;">Hash Key</div>
<div class="inp" style="left:376px;top:368px"></div>
<div class="inp" style="left:927px;top:368px"></div>
<div class="del" style="top:368px"></div>
<svg class="a" style="left:1495.5px;top:384px" width="30" height="32" viewBox="0 0 30 32" fill="none" stroke="#d9281c" stroke-width="2.7" stroke-linecap="round" stroke-linejoin="round"><path d="M3.2 8 H27.6"/><path d="M10.2 7.8 L11.8 4.5 Q12.3 3.5 13.5 3.5 H17.3 Q18.5 3.5 19 4.5 L20.6 7.8"/><path d="M5.4 8.4 L6 26.2 Q6.1 29.2 9.2 29.2 H21.6 Q24.7 29.2 24.8 26.2 L25.4 8.4"/><path d="M11 13.2 V24.4 M15.4 13.2 V24.4 M19.8 13.2 V24.4" stroke-width="2.4"/></svg>
<div class="lbl" style="left:54.60px;top:480.43px;font-size:29.5px;letter-spacing:0.185px;">MAC address</div>
<div class="inp" style="left:376px;top:463px"></div>
<div class="inp" style="left:927px;top:463px"></div>
<div class="del" style="top:463px"></div>
<svg class="a" style="left:1495.5px;top:479px" width="30" height="32" viewBox="0 0 30 32" fill="none" stroke="#d9281c" stroke-width="2.7" stroke-linecap="round" stroke-linejoin="round"><path d="M3.2 8 H27.6"/><path d="M10.2 7.8 L11.8 4.5 Q12.3 3.5 13.5 3.5 H17.3 Q18.5 3.5 19 4.5 L20.6 7.8"/><path d="M5.4 8.4 L6 26.2 Q6.1 29.2 9.2 29.2 H21.6 Q24.7 29.2 24.8 26.2 L25.4 8.4"/><path d="M11 13.2 V24.4 M15.4 13.2 V24.4 M19.8 13.2 V24.4" stroke-width="2.4"/></svg>
<div class="t" style="left:392.00px;top:386.73px;font-size:29.5px;letter-spacing:-0.156px;color:#0f172a">67d2f</div>
<div class="t" style="left:847.60px;top:386.73px;font-size:29.5px;letter-spacing:-0.506px;color:#0f172a">57d</div>
<div class="t" style="left:946.00px;top:386.73px;font-size:29.5px;letter-spacing:-0.923px;font-style:italic;color:#5b6781">Alias</div>
<div class="a" style="left:466px;top:387px;width:11px;height:11px;background:#d2d2d6"></div>
<div class="a" style="left:466px;top:398px;width:11px;height:11px;background:#929298"></div>
<div class="a" style="left:466px;top:409px;width:11px;height:11px;background:#e2e2e4"></div>
<div class="a" style="left:477px;top:387px;width:11px;height:11px;background:#dadade"></div>
<div class="a" style="left:477px;top:398px;width:11px;height:11px;background:#9a9aa0"></div>
<div class="a" style="left:477px;top:409px;width:11px;height:11px;background:#e6e6e8"></div>
<div class="a" style="left:488px;top:387px;width:11px;height:11px;background:#c8c8cc"></div>
<div class="a" style="left:488px;top:398px;width:11px;height:11px;background:#a4a4aa"></div>
<div class="a" style="left:488px;top:409px;width:11px;height:11px;background:#f0f0f2"></div>
<div class="a" style="left:499px;top:387px;width:11px;height:11px;background:#d6d6da"></div>
<div class="a" style="left:499px;top:398px;width:11px;height:11px;background:#9a9aa0"></div>
<div class="a" style="left:499px;top:409px;width:11px;height:11px;background:#f4f4f6"></div>
<div class="a" style="left:510px;top:387px;width:11px;height:11px;background:#c6c6ca"></div>
<div class="a" style="left:510px;top:398px;width:11px;height:11px;background:#9a9aa0"></div>
<div class="a" style="left:510px;top:409px;width:11px;height:11px;background:#e6e6e8"></div>
<div class="a" style="left:521px;top:387px;width:11px;height:11px;background:#c0c0c4"></div>
<div class="a" style="left:521px;top:398px;width:11px;height:11px;background:#b0b0b6"></div>
<div class="a" style="left:521px;top:409px;width:11px;height:11px;background:#e6e6e8"></div>
<div class="a" style="left:532px;top:387px;width:11px;height:11px;background:#c6c6ca"></div>
<div class="a" style="left:532px;top:398px;width:11px;height:11px;background:#a4a4aa"></div>
<div class="a" style="left:532px;top:409px;width:11px;height:11px;background:#f4f4f6"></div>
<div class="a" style="left:543px;top:387px;width:11px;height:11px;background:#c0c0c4"></div>
<div class="a" style="left:543px;top:398px;width:11px;height:11px;background:#9a9aa0"></div>
<div class="a" style="left:543px;top:409px;width:11px;height:11px;background:#f4f4f6"></div>
<div class="a" style="left:554px;top:387px;width:11px;height:11px;background:#ceced2"></div>
<div class="a" style="left:554px;top:398px;width:11px;height:11px;background:#b4b4ba"></div>
<div class="a" style="left:554px;top:409px;width:11px;height:11px;background:#f4f4f6"></div>
<div class="a" style="left:565px;top:387px;width:11px;height:11px;background:#ceced2"></div>
<div class="a" style="left:565px;top:398px;width:11px;height:11px;background:#b0b0b6"></div>
<div class="a" style="left:565px;top:409px;width:11px;height:11px;background:#e6e6e8"></div>
<div class="a" style="left:576px;top:387px;width:11px;height:11px;background:#c6c6ca"></div>
<div class="a" style="left:576px;top:398px;width:11px;height:11px;background:#9a9aa0"></div>
<div class="a" style="left:576px;top:409px;width:11px;height:11px;background:#f4f4f6"></div>
<div class="a" style="left:587px;top:387px;width:11px;height:11px;background:#c8c8cc"></div>
<div class="a" style="left:587px;top:398px;width:11px;height:11px;background:#929298"></div>
<div class="a" style="left:587px;top:409px;width:11px;height:11px;background:#f0f0f2"></div>
<div class="a" style="left:598px;top:387px;width:11px;height:11px;background:#c0c0c4"></div>
<div class="a" style="left:598px;top:398px;width:11px;height:11px;background:#929298"></div>
<div class="a" style="left:598px;top:409px;width:11px;height:11px;background:#f4f4f6"></div>
<div class="a" style="left:609px;top:387px;width:11px;height:11px;background:#ceced2"></div>
<div class="a" style="left:609px;top:398px;width:11px;height:11px;background:#c0c0c6"></div>
<div class="a" style="left:609px;top:409px;width:11px;height:11px;background:#f4f4f6"></div>
<div class="a" style="left:620px;top:387px;width:11px;height:11px;background:#c8c8cc"></div>
<div class="a" style="left:620px;top:398px;width:11px;height:11px;background:#929298"></div>
<div class="a" style="left:620px;top:409px;width:11px;height:11px;background:#e6e6e8"></div>
<div class="a" style="left:631px;top:387px;width:11px;height:11px;background:#d6d6da"></div>
<div class="a" style="left:631px;top:398px;width:11px;height:11px;background:#b4b4ba"></div>
<div class="a" style="left:631px;top:409px;width:11px;height:11px;background:#f0f0f2"></div>
<div class="a" style="left:642px;top:387px;width:11px;height:11px;background:#ceced2"></div>
<div class="a" style="left:642px;top:398px;width:11px;height:11px;background:#a4a4aa"></div>
<div class="a" style="left:642px;top:409px;width:11px;height:11px;background:#f4f4f6"></div>
<div class="a" style="left:653px;top:387px;width:11px;height:11px;background:#ceced2"></div>
<div class="a" style="left:653px;top:398px;width:11px;height:11px;background:#b4b4ba"></div>
<div class="a" style="left:653px;top:409px;width:11px;height:11px;background:#e2e2e4"></div>
<div class="a" style="left:664px;top:387px;width:11px;height:11px;background:#dadade"></div>
<div class="a" style="left:664px;top:398px;width:11px;height:11px;background:#b0b0b6"></div>
<div class="a" style="left:664px;top:409px;width:11px;height:11px;background:#f0f0f2"></div>
<div class="a" style="left:675px;top:387px;width:11px;height:11px;background:#c0c0c4"></div>
<div class="a" style="left:675px;top:398px;width:11px;height:11px;background:#acacb2"></div>
<div class="a" style="left:675px;top:409px;width:11px;height:11px;background:#f0f0f2"></div>
<div class="a" style="left:686px;top:387px;width:11px;height:11px;background:#d2d2d6"></div>
<div class="a" style="left:686px;top:398px;width:11px;height:11px;background:#b4b4ba"></div>
<div class="a" style="left:686px;top:409px;width:11px;height:11px;background:#eaeaec"></div>
<div class="a" style="left:697px;top:387px;width:11px;height:11px;background:#dadade"></div>
<div class="a" style="left:697px;top:398px;width:11px;height:11px;background:#b4b4ba"></div>
<div class="a" style="left:697px;top:409px;width:11px;height:11px;background:#e6e6e8"></div>
<div class="a" style="left:708px;top:387px;width:11px;height:11px;background:#d6d6da"></div>
<div class="a" style="left:708px;top:398px;width:11px;height:11px;background:#c0c0c6"></div>
<div class="a" style="left:708px;top:409px;width:11px;height:11px;background:#f4f4f6"></div>
<div class="a" style="left:719px;top:387px;width:11px;height:11px;background:#c0c0c4"></div>
<div class="a" style="left:719px;top:398px;width:11px;height:11px;background:#9e9ea4"></div>
<div class="a" style="left:719px;top:409px;width:11px;height:11px;background:#e2e2e4"></div>
<div class="a" style="left:730px;top:387px;width:11px;height:11px;background:#d2d2d6"></div>
<div class="a" style="left:730px;top:398px;width:11px;height:11px;background:#a4a4aa"></div>
<div class="a" style="left:730px;top:409px;width:11px;height:11px;background:#e6e6e8"></div>
<div class="a" style="left:741px;top:387px;width:11px;height:11px;background:#d6d6da"></div>
<div class="a" style="left:741px;top:398px;width:11px;height:11px;background:#b0b0b6"></div>
<div class="a" style="left:741px;top:409px;width:11px;height:11px;background:#eaeaec"></div>
<div class="a" style="left:752px;top:387px;width:11px;height:11px;background:#c8c8cc"></div>
<div class="a" style="left:752px;top:398px;width:11px;height:11px;background:#9e9ea4"></div>
<div class="a" style="left:752px;top:409px;width:11px;height:11px;background:#eaeaec"></div>
<div class="a" style="left:763px;top:387px;width:11px;height:11px;background:#c0c0c4"></div>
<div class="a" style="left:763px;top:398px;width:11px;height:11px;background:#b0b0b6"></div>
<div class="a" style="left:763px;top:409px;width:11px;height:11px;background:#e6e6e8"></div>
<div class="a" style="left:774px;top:387px;width:11px;height:11px;background:#dadade"></div>
<div class="a" style="left:774px;top:398px;width:11px;height:11px;background:#a4a4aa"></div>
<div class="a" style="left:774px;top:409px;width:11px;height:11px;background:#f4f4f6"></div>
<div class="a" style="left:785px;top:387px;width:11px;height:11px;background:#d6d6da"></div>
<div class="a" style="left:785px;top:398px;width:11px;height:11px;background:#9e9ea4"></div>
<div class="a" style="left:785px;top:409px;width:11px;height:11px;background:#f0f0f2"></div>
<div class="a" style="left:796px;top:387px;width:11px;height:11px;background:#dadade"></div>
<div class="a" style="left:796px;top:398px;width:11px;height:11px;background:#9e9ea4"></div>
<div class="a" style="left:796px;top:409px;width:11px;height:11px;background:#f4f4f6"></div>
<div class="a" style="left:807px;top:387px;width:11px;height:11px;background:#c0c0c4"></div>
<div class="a" style="left:807px;top:398px;width:11px;height:11px;background:#acacb2"></div>
<div class="a" style="left:807px;top:409px;width:11px;height:11px;background:#e6e6e8"></div>
<div class="a" style="left:818px;top:387px;width:11px;height:11px;background:#c8c8cc"></div>
<div class="a" style="left:818px;top:398px;width:11px;height:11px;background:#a4a4aa"></div>
<div class="a" style="left:818px;top:409px;width:11px;height:11px;background:#f0f0f2"></div>
<div class="a" style="left:829px;top:387px;width:11px;height:11px;background:#c0c0c4"></div>
<div class="a" style="left:829px;top:398px;width:11px;height:11px;background:#a4a4aa"></div>
<div class="a" style="left:829px;top:409px;width:11px;height:11px;background:#e6e6e8"></div>
<div class="a" style="left:840px;top:387px;width:11px;height:11px;background:#dadade"></div>
<div class="a" style="left:840px;top:398px;width:11px;height:11px;background:#c0c0c6"></div>
<div class="a" style="left:840px;top:409px;width:11px;height:11px;background:#f4f4f6"></div>
<div class="a" style="left:851px;top:387px;width:5px;height:11px;background:#dadade"></div>
<div class="a" style="left:851px;top:398px;width:5px;height:11px;background:#acacb2"></div>
<div class="a" style="left:851px;top:409px;width:5px;height:11px;background:#f0f0f2"></div>
<div class="a" style="left:389px;top:483px;width:9px;height:9px;background:#c4c4c8"></div>
<div class="a" style="left:389px;top:492px;width:9px;height:9px;background:#9e9ea4"></div>
<div class="a" style="left:389px;top:501px;width:9px;height:9px;background:#c6c6ca"></div>
<div class="a" style="left:398px;top:483px;width:9px;height:9px;background:#dadade"></div>
<div class="a" style="left:398px;top:492px;width:9px;height:9px;background:#9e9ea4"></div>
<div class="a" style="left:398px;top:501px;width:9px;height:9px;background:#cacace"></div>
<div class="a" style="left:407px;top:483px;width:9px;height:9px;background:#bebec2"></div>
<div class="a" style="left:407px;top:492px;width:9px;height:9px;background:#c8c8ce"></div>
<div class="a" style="left:407px;top:501px;width:9px;height:9px;background:#c6c6ca"></div>
<div class="a" style="left:416px;top:483px;width:9px;height:9px;background:#b4b4b8"></div>
<div class="a" style="left:416px;top:492px;width:9px;height:9px;background:#c0c0c6"></div>
<div class="a" style="left:416px;top:501px;width:9px;height:9px;background:#cacace"></div>
<div class="a" style="left:425px;top:483px;width:9px;height:9px;background:#b4b4b8"></div>
<div class="a" style="left:425px;top:492px;width:9px;height:9px;background:#b0b0b6"></div>
<div class="a" style="left:425px;top:501px;width:9px;height:9px;background:#c2c2c6"></div>
<div class="a" style="left:434px;top:483px;width:9px;height:9px;background:#dadade"></div>
<div class="a" style="left:434px;top:492px;width:9px;height:9px;background:#a4a4aa"></div>
<div class="a" style="left:434px;top:501px;width:9px;height:9px;background:#cacace"></div>
<div class="a" style="left:443px;top:483px;width:9px;height:9px;background:#dadade"></div>
<div class="a" style="left:443px;top:492px;width:9px;height:9px;background:#b0b0b6"></div>
<div class="a" style="left:443px;top:501px;width:9px;height:9px;background:#d4d4d8"></div>
<div class="a" style="left:452px;top:483px;width:9px;height:9px;background:#d2d2d6"></div>
<div class="a" style="left:452px;top:492px;width:9px;height:9px;background:#929298"></div>
<div class="a" style="left:452px;top:501px;width:9px;height:9px;background:#c2c2c6"></div>
<div class="a" style="left:461px;top:483px;width:9px;height:9px;background:#d2d2d6"></div>
<div class="a" style="left:461px;top:492px;width:9px;height:9px;background:#b0b0b6"></div>
<div class="a" style="left:461px;top:501px;width:9px;height:9px;background:#d0d0d4"></div>
<div class="a" style="left:470px;top:483px;width:9px;height:9px;background:#c4c4c8"></div>
<div class="a" style="left:470px;top:492px;width:9px;height:9px;background:#b4b4ba"></div>
<div class="a" style="left:470px;top:501px;width:9px;height:9px;background:#cacace"></div>
<div class="a" style="left:479px;top:483px;width:9px;height:9px;background:#bebec2"></div>
<div class="a" style="left:479px;top:492px;width:9px;height:9px;background:#929298"></div>
<div class="a" style="left:479px;top:501px;width:9px;height:9px;background:#cacace"></div>
<div class="a" style="left:488px;top:483px;width:9px;height:9px;background:#b4b4b8"></div>
<div class="a" style="left:488px;top:492px;width:9px;height:9px;background:#b4b4ba"></div>
<div class="a" style="left:488px;top:501px;width:9px;height:9px;background:#c6c6ca"></div>
<div class="a" style="left:497px;top:483px;width:9px;height:9px;background:#dadade"></div>
<div class="a" style="left:497px;top:492px;width:9px;height:9px;background:#929298"></div>
<div class="a" style="left:497px;top:501px;width:9px;height:9px;background:#d0d0d4"></div>
<div class="a" style="left:506px;top:483px;width:9px;height:9px;background:#d2d2d6"></div>
<div class="a" style="left:506px;top:492px;width:9px;height:9px;background:#9a9aa0"></div>
<div class="a" style="left:506px;top:501px;width:9px;height:9px;background:#cacace"></div>
<div class="a" style="left:515px;top:483px;width:9px;height:9px;background:#c4c4c8"></div>
<div class="a" style="left:515px;top:492px;width:9px;height:9px;background:#9e9ea4"></div>
<div class="a" style="left:515px;top:501px;width:9px;height:9px;background:#d4d4d8"></div>
<div class="a" style="left:524px;top:483px;width:9px;height:9px;background:#aeaeb2"></div>
<div class="a" style="left:524px;top:492px;width:9px;height:9px;background:#929298"></div>
<div class="a" style="left:524px;top:501px;width:9px;height:9px;background:#bcbcc0"></div>
<div class="a" style="left:533px;top:483px;width:9px;height:9px;background:#cacace"></div>
<div class="a" style="left:533px;top:492px;width:9px;height:9px;background:#c8c8ce"></div>
<div class="a" style="left:533px;top:501px;width:9px;height:9px;background:#bcbcc0"></div>
<div class="a" style="left:542px;top:483px;width:9px;height:9px;background:#c4c4c8"></div>
<div class="a" style="left:542px;top:492px;width:9px;height:9px;background:#b0b0b6"></div>
<div class="a" style="left:542px;top:501px;width:9px;height:9px;background:#c2c2c6"></div>
<div class="a" style="left:551px;top:483px;width:9px;height:9px;background:#c4c4c8"></div>
<div class="a" style="left:551px;top:492px;width:9px;height:9px;background:#a4a4aa"></div>
<div class="a" style="left:551px;top:501px;width:9px;height:9px;background:#c2c2c6"></div>
<div class="a" style="left:560px;top:483px;width:9px;height:9px;background:#c4c4c8"></div>
<div class="a" style="left:560px;top:492px;width:9px;height:9px;background:#9a9aa0"></div>
<div class="a" style="left:560px;top:501px;width:9px;height:9px;background:#cacace"></div>
<div class="a" style="left:569px;top:483px;width:9px;height:9px;background:#bebec2"></div>
<div class="a" style="left:569px;top:492px;width:9px;height:9px;background:#b4b4ba"></div>
<div class="a" style="left:569px;top:501px;width:9px;height:9px;background:#c2c2c6"></div>
<div class="a" style="left:578px;top:483px;width:9px;height:9px;background:#ceced2"></div>
<div class="a" style="left:578px;top:492px;width:9px;height:9px;background:#a4a4aa"></div>
<div class="a" style="left:578px;top:501px;width:9px;height:9px;background:#d0d0d4"></div>
<div class="a" style="left:587px;top:483px;width:9px;height:9px;background:#cacace"></div>
<div class="a" style="left:587px;top:492px;width:9px;height:9px;background:#a4a4aa"></div>
<div class="a" style="left:587px;top:501px;width:9px;height:9px;background:#c6c6ca"></div>
<div class="a" style="left:596px;top:483px;width:9px;height:9px;background:#ceced2"></div>
<div class="a" style="left:596px;top:492px;width:9px;height:9px;background:#a4a4aa"></div>
<div class="a" style="left:596px;top:501px;width:9px;height:9px;background:#d0d0d4"></div>
<div class="a" style="left:605px;top:483px;width:9px;height:9px;background:#cacace"></div>
<div class="a" style="left:605px;top:492px;width:9px;height:9px;background:#a4a4aa"></div>
<div class="a" style="left:605px;top:501px;width:9px;height:9px;background:#cacace"></div>
<div class="a" style="left:614px;top:483px;width:9px;height:9px;background:#c4c4c8"></div>
<div class="a" style="left:614px;top:492px;width:9px;height:9px;background:#929298"></div>
<div class="a" style="left:614px;top:501px;width:9px;height:9px;background:#bcbcc0"></div>
<div class="a" style="left:623px;top:483px;width:9px;height:9px;background:#d2d2d6"></div>
<div class="a" style="left:623px;top:492px;width:9px;height:9px;background:#9e9ea4"></div>
<div class="a" style="left:623px;top:501px;width:9px;height:9px;background:#d4d4d8"></div>
<div class="a" style="left:632px;top:483px;width:9px;height:9px;background:#aeaeb2"></div>
<div class="a" style="left:632px;top:492px;width:9px;height:9px;background:#c8c8ce"></div>
<div class="a" style="left:632px;top:501px;width:9px;height:9px;background:#c6c6ca"></div>
<div class="a" style="left:641px;top:483px;width:5px;height:9px;background:#bebec2"></div>
<div class="a" style="left:641px;top:492px;width:5px;height:9px;background:#c8c8ce"></div>
<div class="a" style="left:641px;top:501px;width:5px;height:9px;background:#c2c2c6"></div>
<div class="a" style="left:941px;top:486px;width:11px;height:11px;background:#a2a2a6"></div>
<div class="a" style="left:941px;top:497px;width:11px;height:12px;background:#a8a8ae"></div>
<div class="a" style="left:952px;top:486px;width:11px;height:11px;background:#d2d2d6"></div>
<div class="a" style="left:952px;top:497px;width:11px;height:12px;background:#a4a4aa"></div>
<div class="a" style="left:963px;top:486px;width:11px;height:11px;background:#ceced2"></div>
<div class="a" style="left:963px;top:497px;width:11px;height:12px;background:#a4a4aa"></div>
<div class="a" style="left:974px;top:486px;width:11px;height:11px;background:#aeaeb2"></div>
<div class="a" style="left:974px;top:497px;width:11px;height:12px;background:#c0c0c6"></div>
<div class="a" style="left:985px;top:486px;width:11px;height:11px;background:#a2a2a6"></div>
<div class="a" style="left:985px;top:497px;width:11px;height:12px;background:#b2b2b8"></div>
<div class="a" style="left:996px;top:486px;width:11px;height:11px;background:#cacace"></div>
<div class="a" style="left:996px;top:497px;width:11px;height:12px;background:#b4b4ba"></div>
<div class="a" style="left:1007px;top:486px;width:11px;height:11px;background:#aeaeb2"></div>
<div class="a" style="left:1007px;top:497px;width:11px;height:12px;background:#b2b2b8"></div>
<div class="a" style="left:1018px;top:486px;width:11px;height:11px;background:#cacace"></div>
<div class="a" style="left:1018px;top:497px;width:11px;height:12px;background:#c0c0c6"></div>
<div class="a" style="left:1029px;top:486px;width:11px;height:11px;background:#bebec2"></div>
<div class="a" style="left:1029px;top:497px;width:11px;height:12px;background:#c0c0c6"></div>
<div class="a" style="left:1040px;top:486px;width:11px;height:11px;background:#aeaeb2"></div>
<div class="a" style="left:1040px;top:497px;width:11px;height:12px;background:#b2b2b8"></div>
<div class="a" style="left:1051px;top:486px;width:11px;height:11px;background:#aeaeb2"></div>
<div class="a" style="left:1051px;top:497px;width:11px;height:12px;background:#b4b4ba"></div>
<div class="a" style="left:1062px;top:486px;width:11px;height:11px;background:#aeaeb2"></div>
<div class="a" style="left:1062px;top:497px;width:11px;height:12px;background:#b4b4ba"></div>
<div class="a" style="left:1073px;top:486px;width:8px;height:11px;background:#b4b4b8"></div>
<div class="a" style="left:1073px;top:497px;width:8px;height:12px;background:#b4b4ba"></div>
<div class="a" style="left:941px;top:520px;width:194px;height:2px;background:#ededf0"></div>
<div class="btn" style="left:56px;top:600px;width:318px;height:67px;background:#dbe2f5;border:2px solid #a9b9ea"></div>
<svg class="a" style="left:84px;top:616.4px" width="32" height="32" viewBox="0 0 32 32" fill="none" stroke="#182a62" stroke-width="3" stroke-linecap="round"><circle cx="16" cy="16" r="12.3"/><path d="M16 10.2 V21.8 M10.2 16 H21.8"/></svg>
<div class="t" style="left:128.60px;top:618.65px;font-size:29px;letter-spacing:-0.554px;font-weight:700;color:#182a62">Add identifier</div>
<svg class="a" style="left:322px;top:624.2px" width="24" height="18" viewBox="0 0 24 18" fill="none" stroke="#182a62" stroke-width="3" stroke-linecap="round" stroke-linejoin="round"><path d="M3.6 5.4 L12 13.6 L20.4 5.4"/></svg>
<div class="btn" style="left:1178px;top:732px;width:168px;height:67px;background:#dbe2f5;border:2px solid #a9b9ea"></div>
<div class="t" style="left:1215.50px;top:750.55px;font-size:29px;letter-spacing:-0.208px;font-weight:700;color:#182a62">Cancel</div>
<div class="btn" style="left:1374px;top:732px;width:168px;height:67px;background:#182a62"></div>
<div class="t" style="left:1426.50px;top:750.55px;font-size:29px;letter-spacing:-1.367px;font-weight:700;color:#fff">Save</div>
<div class="a" style="left:0;top:0;width:1600px;height:822px;border:1.5px solid #fff;border-radius:12px"></div>
</div>
</body>
</html>
